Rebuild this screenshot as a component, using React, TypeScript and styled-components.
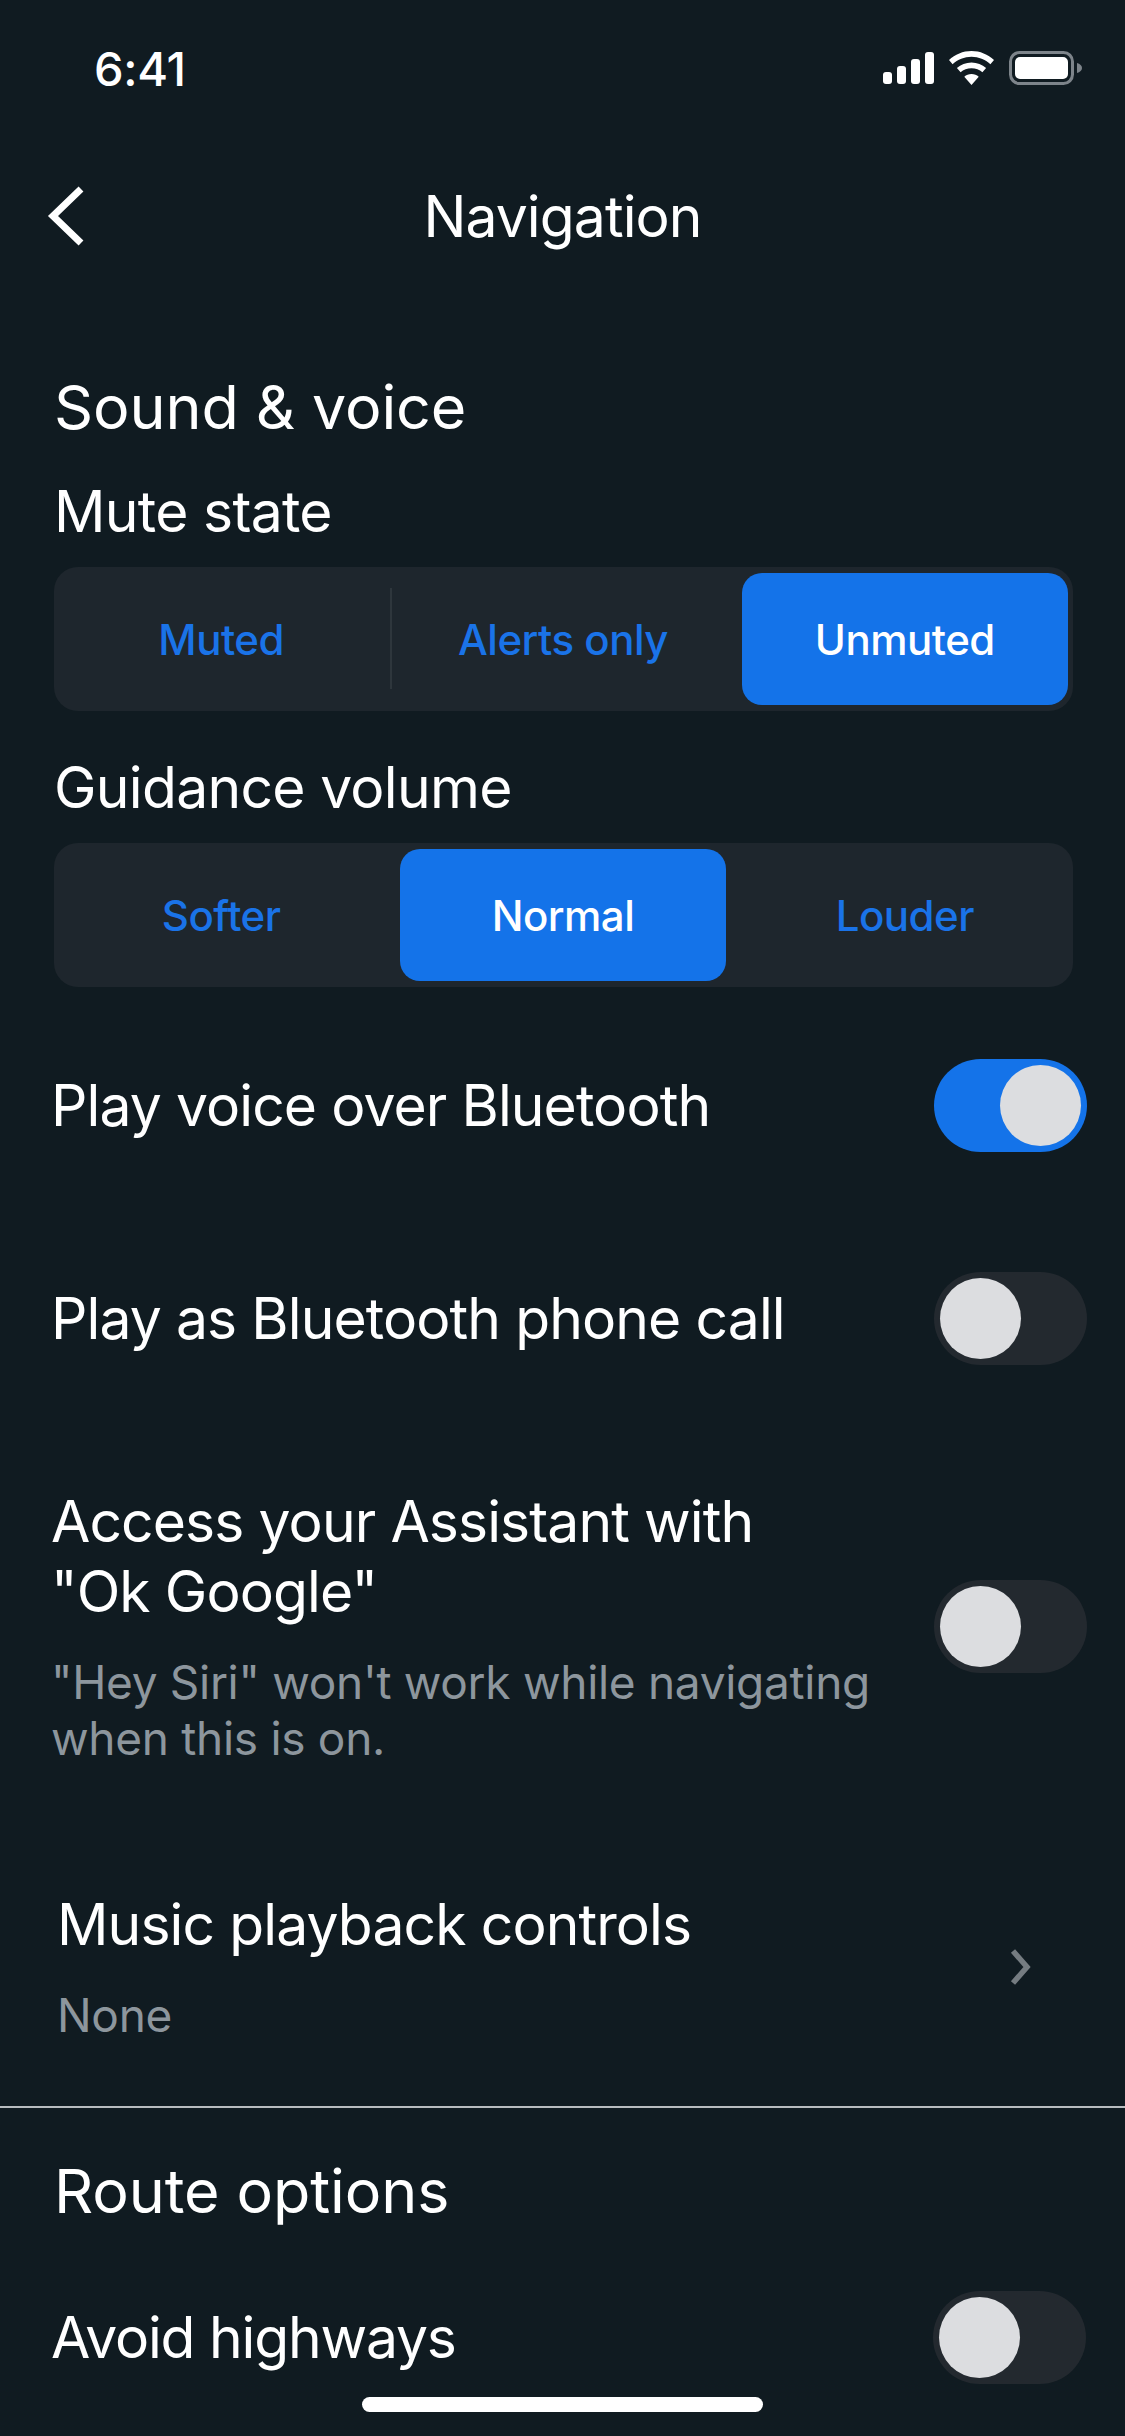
import { FC } from "react"
import styled, { createGlobalStyle } from "styled-components"

const GlobalStyle = createGlobalStyle`
  html, body {
    margin: 0;
    background: #101b21;
  }
  * {
    box-sizing: border-box;
  }
`

const Screen = styled.div`
  position: relative;
  width: 1125px;
  height: 2436px;
  overflow: hidden;
  background: #101b21;
  color: #fff;
  font-family: Inter, "Liberation Sans", sans-serif;
`

const StatusBar = styled.div`
  height: 136px;
  padding: 0 43px 0 94px;
  display: flex;
  align-items: center;
  justify-content: space-between;
`

const Clock = styled.span`
  font-size: 47px;
  font-weight: 500;
  letter-spacing: -0.3px;
`

const StatusIcons = styled.div`
  display: flex;
  align-items: center;
  gap: 15px;
`

const NavBar = styled.div`
  height: 160px;
  padding: 0 45px;
  display: grid;
  grid-template-columns: 1fr auto 1fr;
  align-items: center;
`

const NavTitle = styled.h1`
  margin: 0;
  font-size: 57px;
  font-weight: 400;
  letter-spacing: -0.9px;
`

const Content = styled.div`
  padding: 81px 52px 0 54px;
`

const Heading = styled.h2`
  margin: 0;
  height: 58px;
  line-height: 60px;
  font-size: 61px;
  font-weight: 400;
  letter-spacing: -0.1px;
`

const Label = styled.h3`
  margin: 49px 0 27px;
  height: 56px;
  line-height: 56px;
  font-size: 57px;
  font-weight: 400;
  letter-spacing: -0.7px;
`

const Segments = styled.div`
  height: 144px;
  padding: 6px 5px 6px 4px;
  display: grid;
  grid-template-columns: repeat(3, 1fr);
  gap: 15.5px;
  border-radius: 24px;
  background: #1e262d;
`

const Segment = styled.div<{ $active?: boolean; $divided?: boolean }>`
  position: relative;
  display: flex;
  align-items: center;
  justify-content: center;
  border-radius: 20px;
  font-size: 42px;
  font-weight: 500;
  letter-spacing: -0.5px;
  color: ${(p) => (p.$active ? "#fff" : "#1a73e8")};
  background: ${(p) => (p.$active ? "#1473e9" : "transparent")};

  ${(p) =>
    p.$divided &&
    `
    &::after {
      content: "";
      position: absolute;
      top: 15px;
      bottom: 16px;
      right: -8px;
      width: 2px;
      background: #2e363c;
    }
  `}
`

const ToggleRow = styled.div<{ $gap: number }>`
  margin: ${(p) => p.$gap}px -14px 0 -3px;
  min-height: 93px;
  display: flex;
  align-items: center;
  justify-content: space-between;
`

const RowTitle = styled.div`
  font-size: 57px;
  line-height: 70px;
  font-weight: 400;
  letter-spacing: -0.9px;
`

const RowHint = styled.div`
  margin-top: 27px;
  font-size: 46px;
  line-height: 56px;
  font-weight: 400;
  letter-spacing: -0.3px;
  color: #8d969d;
`

const ToggleTrack = styled.div<{ $on?: boolean }>`
  flex: none;
  width: 153px;
  height: 93px;
  padding: 6px;
  display: flex;
  justify-content: ${(p) => (p.$on ? "flex-end" : "flex-start")};
  border-radius: 47px;
  background: ${(p) => (p.$on ? "#1473e9" : "#23292f")};
`

const ToggleKnob = styled.div`
  width: 81px;
  height: 81px;
  border-radius: 50%;
  background: #dcdde0;
`

const LinkRow = styled.div`
  margin: 124px 0 0 3px;
  padding-right: 41px;
  display: flex;
  align-items: center;
  justify-content: space-between;
`

const Divider = styled.div`
  margin-top: 63px;
  height: 2px;
  background: #b7bcbf;
`

const RouteSection = styled.div`
  padding: 53px 39px 0 51px;
`

const RouteHeading = styled(Heading)`
  margin-left: 3px;
`

const RouteRow = styled.div`
  margin-top: 72px;
  display: flex;
  align-items: center;
  justify-content: space-between;
`

const RouteTitle = styled(RowTitle)`
  letter-spacing: -1.2px;
`

const HomeBar = styled.div`
  position: absolute;
  left: 362px;
  bottom: 24px;
  width: 401px;
  height: 15px;
  border-radius: 8px;
  background: #fff;
`

const Toggle: FC<{ on?: boolean }> = ({ on }) => (
  <ToggleTrack $on={on}>
    <ToggleKnob />
  </ToggleTrack>
)

const SignalIcon = () => (
  <svg width="51" height="32" viewBox="0 0 51 32" fill="#fff">
    <rect x="0" y="20" width="9" height="12" rx="3" />
    <rect x="14" y="14" width="9" height="18" rx="3" />
    <rect x="28" y="7" width="9" height="25" rx="3" />
    <rect x="42" y="0" width="9" height="32" rx="3" />
  </svg>
)

const WifiIcon = () => (
  <svg width="45" height="34" viewBox="0 0 45 34" fill="#fff">
    <path d="M22.5 0C31 0 39 3.4 45 9l-3.6 4.2C36.3 8.600 29.600 5.800 22.500 5.800S8.700 8.600 3.600 13.200L0 9C6 3.400 14 0 22.500 0Z" />
    <path d="M22.500 11.500c5.600 0 10.700 2.100 14.600 5.600l-3.700 4.200c-2.900-2.600-6.700-4.100-10.900-4.100s-8 1.500-10.900 4.100l-3.700-4.200c3.900-3.500 9-5.600 14.600-5.600Z" />
    <path d="M22.500 23c2.800 0 5.300 1 7.200 2.700L22.500 34l-7.200-8.300C17.200 24 19.700 23 22.500 23Z" />
  </svg>
)

const BatteryIcon = () => (
  <svg width="73" height="34" viewBox="0 0 73 34">
    <rect x="1.500" y="1.500" width="62" height="31" rx="9" fill="none" stroke="#7d848a" strokeWidth="3" />
    <rect x="6" y="6" width="53" height="22" rx="5" fill="#fff" />
    <path d="M68 12c3 .8 5 2.600 5 5s-2 4.200-5 5Z" fill="#7d848a" />
  </svg>
)

const BackIcon = () => (
  <svg width="40" height="60" viewBox="0 0 40 60">
    <polyline points="36,3 8,30 36,57" fill="none" stroke="#fff" strokeWidth="7" />
  </svg>
)

const ChevronIcon = () => (
  <svg width="22" height="36" viewBox="0 0 22 36">
    <polyline points="3,2 17,18 3,34" fill="none" stroke="#757c81" strokeWidth="5.500" />
  </svg>
)

export default function App() {
  return (
    <Screen>
      <GlobalStyle />
      <StatusBar>
        <Clock>6:41</Clock>
        <StatusIcons>
          <SignalIcon />
          <WifiIcon />
          <BatteryIcon />
        </StatusIcons>
      </StatusBar>
      <NavBar>
        <BackIcon />
        <NavTitle>Navigation</NavTitle>
      </NavBar>
      <Content>
        <Heading>Sound &amp; voice</Heading>
        <Label>Mute state</Label>
        <Segments>
          <Segment $divided>Muted</Segment>
          <Segment>Alerts only</Segment>
          <Segment $active>Unmuted</Segment>
        </Segments>
        <Label>Guidance volume</Label>
        <Segments>
          <Segment>Softer</Segment>
          <Segment $active>Normal</Segment>
          <Segment>Louder</Segment>
        </Segments>
        <ToggleRow $gap={72}>
          <RowTitle>Play voice over Bluetooth</RowTitle>
          <Toggle on />
        </ToggleRow>
        <ToggleRow $gap={120}>
          <RowTitle>Play as Bluetooth phone call</RowTitle>
          <Toggle />
        </ToggleRow>
        <ToggleRow $gap={122}>
          <div>
            <RowTitle>
              Access your Assistant with
              <br />
              "Ok Google"
            </RowTitle>
            <RowHint>
              "Hey Siri" won't work while navigating
              <br />
              when this is on.
            </RowHint>
          </div>
          <Toggle />
        </ToggleRow>
        <LinkRow>
          <div>
            <RowTitle>Music playback controls</RowTitle>
            <RowHint>None</RowHint>
          </div>
          <ChevronIcon />
        </LinkRow>
      </Content>
      <Divider />
      <RouteSection>
        <RouteHeading>Route options</RouteHeading>
        <RouteRow>
          <RouteTitle>Avoid highways</RouteTitle>
          <Toggle />
        </RouteRow>
      </RouteSection>
      <HomeBar />
    </Screen>
  )
}
